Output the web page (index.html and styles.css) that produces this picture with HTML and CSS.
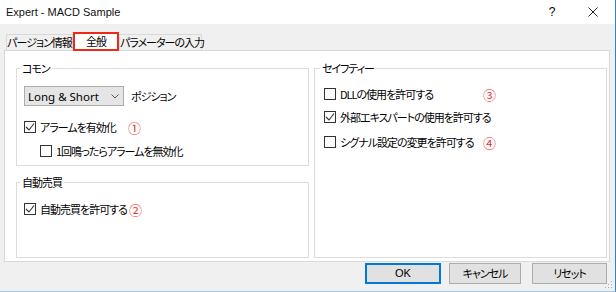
FILE: index.html
```html
<!DOCTYPE html>
<html>
	<head>
		<meta charset="utf-8">
		<title>Expert - MACD Sample</title>
		<link rel="stylesheet" href="styles.css">
	</head>
	<body>
		<div class="window">
			<div class="titlebar">
				<span class="title">Expert - MACD Sample</span>
				<span class="help">?</span>
				<span class="close">
					<svg width="10" height="10" viewBox="0 0 10 10"><path d="M0.5 0.5L9.5 9.5M9.5 0.5L0.5 9.5" stroke="#222" stroke-width="1" fill="none"/></svg>
				</span>
			</div>
			<div class="main">
				<div class="tabs">
					<div class="tab t1">パージョン情報</div>
					<div class="tab ac">全般</div>
					<div class="tab t3">パラメーターの入力</div>
				</div>
				<div class="panel">
					<div class="col">
						<fieldset class="group common">
							<legend>コモン</legend>
							<div class="select-row">
								<div class="select">
									<span>Long &amp; Short</span>
									<svg width="8" height="5" viewBox="0 0 8 5"><path d="M0.5 0.5L4 4L7.5 0.5" stroke="#555" fill="none"/></svg>
								</div>
								<span class="select-label">ポジション</span>
							</div>
							<div class="check first">
								<span class="box on"><svg width="10" height="10" viewBox="0 0 10 10"><path d="M1 5L4 8L9 1.5" stroke="#333" stroke-width="1.1" fill="none"/></svg></span>
								<span class="text w1">アラームを有効化</span>
								<span class="num">①</span>
							</div>
							<div class="check sub">
								<span class="box"></span>
								<span class="text">1回鳴ったらアラームを無効化</span>
							</div>
						</fieldset>
						<fieldset class="group auto">
							<legend>自動売買</legend>
							<div class="check first">
								<span class="box on"><svg width="10" height="10" viewBox="0 0 10 10"><path d="M1 5L4 8L9 1.5" stroke="#333" stroke-width="1.1" fill="none"/></svg></span>
								<span class="text">自動売買を許可する</span>
								<span class="num tight">②</span>
							</div>
						</fieldset>
					</div>
					<fieldset class="group safety">
						<legend>セイフティー</legend>
						<div class="check first">
							<span class="box"></span>
							<span class="text w2">DLLの使用を許可する</span>
							<span class="num">③</span>
						</div>
						<div class="check">
							<span class="box on"><svg width="10" height="10" viewBox="0 0 10 10"><path d="M1 5L4 8L9 1.5" stroke="#333" stroke-width="1.1" fill="none"/></svg></span>
							<span class="text">外部エキスパートの使用を許可する</span>
						</div>
						<div class="check last">
							<span class="box"></span>
							<span class="text w2">シグナル設定の変更を許可する</span>
							<span class="num">④</span>
						</div>
					</fieldset>
				</div>
				<div class="buttons">
					<div class="btn ok">OK</div>
					<div class="btn cancel">キャンセル</div>
					<div class="btn reset">リセット</div>
				</div>
			</div>
			<svg class="grip" width="8" height="8" viewBox="0 0 8 8">
				<rect x="6" y="0" width="1" height="1" fill="#aaa"/>
				<rect x="3" y="3" width="1" height="1" fill="#aaa"/>
				<rect x="6" y="3" width="1" height="1" fill="#aaa"/>
				<rect x="0" y="6" width="1" height="1" fill="#aaa"/>
				<rect x="3" y="6" width="1" height="1" fill="#aaa"/>
				<rect x="6" y="6" width="1" height="1" fill="#aaa"/>
			</svg>
		</div>
	</body>
</html>
```

FILE: styles.css
```css
*{margin: 0;padding: 0;box-sizing: border-box;}
body{background: #fff;font-family: "Noto Sans CJK JP", sans-serif;font-size: 11px;letter-spacing: -1px;color: #000;font-feature-settings: "palt";}
.window{
	width: 616px;
	height: 292px;
	position: relative;
	background: #f0f0f0;
	border-right: 1px solid #2b80d7;
	border-bottom: 1px solid #9fcbef;
	display: flex;
	flex-direction: column;
}
.titlebar{height: 24px;background: #fff;display: flex;align-items: center;padding-left: 6px;}
.title{font-family: "Liberation Sans", sans-serif;font-size: 11px;letter-spacing: 0;flex: 1;color: #111;}
.help{font-family: "Liberation Sans", sans-serif;font-size: 12px;letter-spacing: 0;width: 10px;text-align: center;margin-right: 31px;}
.close{width: 10px;height: 10px;margin-right: 17px;display: flex;}

.main{padding: 8px 0 0 4px;}
.tabs{height: 18px;display: flex;align-items: flex-end;padding-left: 2px;}
.tab{height: 16px;line-height: 14px;text-align: center;border: 1px solid #d9d9d9;border-bottom: none;background: #f0f0f0;white-space: nowrap;}
.tab.t1{width: 67px;}
.tab.t3{width: 83px;}
.tab.ac{height: 19px;width: 46px;margin-bottom: -1px;line-height: 15px;background: #fff;border: 2px solid #ee2a16;position: relative;z-index: 1;}

.panel{
	width: 606px;
	height: 212px;
	background: #fff;
	border: 1px solid #d9d9d9;
	padding: 10px 1px 3px 11px;
	display: grid;
	grid-template-columns: 293px 293px;
	column-gap: 5px;
}
.col{display: flex;flex-direction: column;}
.group{border: 1px solid #dcdcdc;padding: 0 6px 6px 3px;min-width: 0;}
.group legend{padding: 0 2px;line-height: 14px;}
.group.auto{margin-top: 9px;flex: 1;}
.group.safety{padding-left: 5px;}

.select-row{display: flex;align-items: center;margin: 11px 0 0 4px;}
.select{width: 100px;height: 20px;border: 1px solid #adadad;background: #e5e5e5;display: flex;align-items: center;justify-content: space-between;padding: 0 4px 0 3px;font-family: "Noto Sans", sans-serif;font-size: 11.5px;letter-spacing: 0;}
.select-label{margin-left: 7px;}

.check{display: flex;align-items: center;height: 16px;margin: 7px 0 0 4px;}
.common .check.first{margin-top: 13px;}
.auto .check.first{margin-top: 12px;}
.safety .check.first{margin-top: 11px;}
.safety .check.last{margin-top: 9px;}
.check.sub{margin: 8px 0 0 20px;}
.box{width: 12px;height: 12px;border: 1px solid #333;background: #fff;display: flex;align-items: center;justify-content: center;flex: none;}
.text{margin-left: 4px;white-space: nowrap;}
.text.w1{width: 88px;}
.text.w2{width: 143px;}
.num{color: #e8302a;font-size: 13px;letter-spacing: 0;}
.num.tight{margin-left: 2px;}

.buttons{display: flex;justify-content: flex-end;margin-top: 1px;padding-right: 8px;}
.btn{height: 21px;line-height: 19px;text-align: center;background: #e1e1e1;border: 1px solid #adadad;}
.btn.ok{width: 76px;border: 2px solid #0078d7;line-height: 17px;font-family: "Liberation Sans", sans-serif;letter-spacing: 0;}
.btn.cancel{width: 72px;margin-left: 8px;}
.btn.reset{width: 75px;margin-left: 11px;}

.grip{position: absolute;right: 2px;bottom: 2px;}
```
